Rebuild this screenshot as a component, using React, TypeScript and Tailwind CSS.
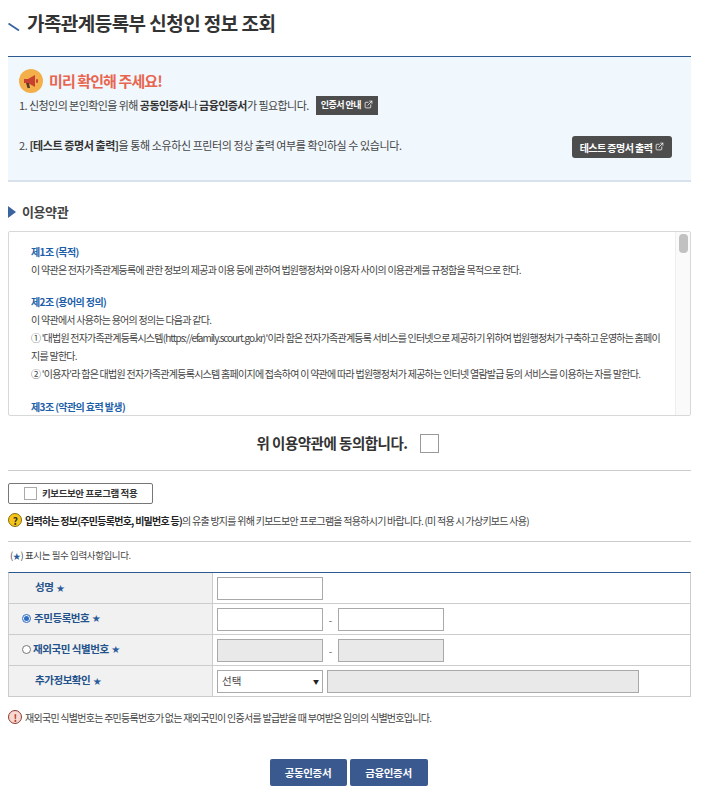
import { ExternalLink } from "lucide-react";

const font = "font-['Noto_Sans_CJK_KR','Noto_Sans',sans-serif]";

function Star() {
  return <span className="text-[#2b5a9b] text-[8px] ml-[3px]">★</span>;
}

function Megaphone() {
  return (
    <svg width="24" height="24" viewBox="0 0 24 24" className="shrink-0">
      <circle cx="12" cy="12" r="12" fill="#f3b04a" />
      <path d="M5 10h4l7-4v12l-7-4H5z" fill="#c8402f" />
      <path d="M7 14h3l1 5H8.500z" fill="#5a3a2a" />
      <rect x="17" y="10" width="2" height="4" rx="1" fill="#c8402f" />
    </svg>
  );
}

function InfoBox() {
  return (
    <div className="h-[126px] border-t border-t-[#2c5a8e] border-b-2 border-b-[#d9e2ec] bg-[#f0f7fd] pl-[11px] pr-[19px] pt-3">
      <div className="flex items-center gap-[6px] h-6">
        <Megaphone />
        <span className="text-[15px] font-bold tracking-[-0.9px] text-[#e8654f]">미리 확인해 주세요!</span>
      </div>
      <div className="flex items-center h-[20px] mt-[2px] text-[11px] tracking-[-0.56px] text-[#444]">
        <span>
          1. 신청인의 본인확인을 위해 <b className="font-bold text-[#333]">공동인증서</b>나 <b className="font-bold text-[#333]">금융인증서</b>가 필요합니다.
        </span>
        <span className="ml-[7px] flex items-center gap-[3px] h-[19px] px-[5px] bg-[#4d4d4d] text-white text-[9px] font-bold tracking-[-0.5px]">
          인증서 안내
          <ExternalLink size={9} strokeWidth={2} className="mb-[2px]" />
        </span>
      </div>
      <div className="flex items-center justify-between h-[22px] mt-[19px] text-[11px] tracking-[-0.42px] text-[#444]">
        <span>
          2. <b className="font-bold text-[#333]">[테스트 증명서 출력]</b>을 통해 소유하신 프린터의 정상 출력 여부를 확인하실 수 있습니다.
        </span>
        <span className="flex items-center justify-center gap-[3px] w-[100px] h-[22px] mt-[4px] rounded-[3px] bg-[#4d4d4d] text-white text-[10px] font-bold tracking-[-0.55px]">
          테스트 증명서 출력
          <ExternalLink size={9} strokeWidth={2} className="mb-[2px]" />
        </span>
      </div>
    </div>
  );
}

function Terms() {
  const title = "text-[#1d5fa8] font-bold h-[18px] tracking-[-0.6px]";
  const line = "h-[18px] whitespace-nowrap";
  return (
    <div className="relative h-[185px] mt-[9px] rounded-[2px] border border-[#d8d8d8] overflow-hidden">
      <div className="pl-[22px] pt-[11px] text-[10px] leading-[18px] tracking-[-0.74px] text-[#444]">
        <p className={title}>제1조 (목적)</p>
        <p className={line}>이 약관은 전자가족관계등록에 관한 정보의 제공과 이용 등에 관하여 법원행정처와 이용자 사이의 이용관계를 규정함을 목적으로 한다.</p>
        <p className={`${title} mt-[14px]`}>제2조 (용어의 정의)</p>
        <p className={line}>이 약관에서 사용하는 용어의 정의는 다음과 같다.</p>
        <p className={`${line} tracking-[-0.8px]`}>
          ① '대법원 전자가족관계등록시스템(<span className="tracking-[-1.05px]">https://efamily.scourt.go.kr</span>)'이라 함은 전자가족관계등록 서비스를 인터넷으로 제공하기 위하여 법원행정처가 구축하고 운영하는 홈페이
        </p>
        <p className={line}>지를 말한다.</p>
        <p className={line}>② '이용자'라 함은 대법원 전자가족관계등록시스템 홈페이지에 접속하여 이 약관에 따라 법원행정처가 제공하는 인터넷 열람발급 등의 서비스를 이용하는 자를 말한다.</p>
        <p className={`${title} mt-[15px]`}>제3조 (약관의 효력 발생)</p>
      </div>
      <div className="absolute right-0 top-0 bottom-0 w-[15px] border-l border-[#eee] bg-[#fafafa]">
        <div className="mx-auto mt-[2px] w-[9px] h-[19px] rounded-[4px] bg-[#c1c1c1]" />
      </div>
    </div>
  );
}

function Field({ gray, className = "w-[106px]" }: { gray?: boolean; className?: string }) {
  return (
    <div
      className={`h-[23px] border border-[#a9a9a9] ${gray ? "bg-[#e9e9e9]" : "bg-white"} ${className}`}
    />
  );
}

function Row({ label, children, last }: { label: React.ReactNode; children: React.ReactNode; last?: boolean }) {
  return (
    <div className={`flex ${last ? "h-[30px]" : "h-[31px] border-b border-[#ccc]"}`}>
      <div className="w-[204px] shrink-0 flex items-center pb-[2px] bg-[#f1f1f1] border-r border-[#ccc] text-[10.500px] font-bold tracking-[-0.45px] text-[#24528a]">
        {label}
      </div>
      <div className="flex-1 flex items-center pl-1 gap-1">{children}</div>
    </div>
  );
}

function Dash() {
  return <span className="w-[7px] text-center text-[10px] text-[#666]">-</span>;
}

export default function App() {
  return (
    <div className={`w-[724px] h-[809px] bg-white pl-2 pr-[33px] overflow-hidden text-[#333] ${font}`}>
      <div className="flex items-center h-[56px] pb-[9px]">
        <svg width="12" height="8" viewBox="0 0 12 8" className="mr-[7px] mt-[6px] shrink-0">
          <path d="M0.500 0.500 L11 7.500" stroke="#3a64a0" strokeWidth="1.800" />
        </svg>
        <h1 className="text-[19px] font-bold tracking-[-0.55px] text-[#333]">가족관계등록부 신청인 정보 조회</h1>
      </div>

      <InfoBox />

      <div className="flex items-center h-[20px] mt-[20px]">
        <span className="w-0 h-0 border-y-[6px] border-y-transparent border-l-[8px] border-l-[#3a64a0] mr-[6px]" />
        <h2 className="text-[13px] font-bold tracking-[-0.4px] text-[#444]">이용약관</h2>
      </div>

      <Terms />

      <div className="flex items-center justify-center gap-3 h-[20px] mt-[17px] pr-[4px]">
        <span className="text-[14.500px] font-bold tracking-[-0.5px] text-[#333]">위 이용약관에 동의합니다.</span>
        <span className="w-[19px] h-[19px] border border-[#999] bg-white" />
      </div>

      <div className="border-t border-[#ccc] mt-[17px]" />

      <div className="flex items-center w-[145px] h-[21px] mt-[12px] pl-[15px] rounded-[2px] border border-[#777]">
        <span className="w-[13px] h-[13px] border border-[#aaa]" />
        <span className="ml-[5px] text-[9.500px] font-bold tracking-[-0.4px] text-[#333]">키보드보안 프로그램 적용</span>
      </div>

      <div className="flex items-center h-[16px] mt-[8px] text-[10px] tracking-[-0.74px] text-[#444]">
        <span className="flex items-center justify-center w-[14px] h-[14px] mr-[3px] rounded-full bg-[#f5c518] border border-[#8a6d10] text-[10px] font-bold text-[#333]">?</span>
        <span>
          <b className="font-bold text-[#222]">입력하는 정보(주민등록번호, 비밀번호 등)</b>의 유출 방지를 위해 키보드보안 프로그램을 적용하시기 바랍니다. (미 적용 시 가상키보드 사용)
        </span>
      </div>

      <div className="border-t border-[#ccc] mt-[13px]" />

      <p className="h-[16px] mt-[5px] pl-[2px] text-[9.500px] leading-[16px] tracking-[-0.4px] text-[#444]">
        (<span className="text-[#2b5a9b] text-[8px]">★</span>) 표시는 필수 입력사항입니다.
      </p>

      <div className="mt-[9px] border-t border-t-[#2c5a8e] border-x border-b border-x-[#ccc] border-b-[#ccc]">
        <Row label={<span className="pl-[26px]">성명<Star /></span>}>
          <Field />
        </Row>
        <Row
          label={
            <span className="flex items-center pl-[13px]">
              <span className="flex items-center justify-center w-[9px] h-[9px] mr-[3px] rounded-full border border-[#2b6cc4]">
                <span className="w-[5px] h-[5px] rounded-full bg-[#2b6cc4]" />
              </span>
              주민등록번호<Star />
            </span>
          }
        >
          <Field />
          <Dash />
          <Field />
        </Row>
        <Row
          label={
            <span className="flex items-center pl-[13px]">
              <span className="w-[9px] h-[9px] mr-[2px] rounded-full border border-[#777] bg-white" />
              재외국민 식별번호<Star />
            </span>
          }
        >
          <Field gray />
          <Dash />
          <Field gray />
        </Row>
        <Row last label={<span className="pl-[26px]">추가정보확인<Star /></span>}>
          <div className="flex items-center justify-between w-[106px] h-[23px] pl-[4px] pr-[3px] border border-[#a9a9a9] text-[10.500px] text-[#444]">
            선택
            <span className="text-[6px] text-[#222]">▼</span>
          </div>
          <Field gray className="w-[312px]" />
        </Row>
      </div>

      <div className="flex items-center h-[16px] mt-[12px] text-[10px] tracking-[-0.74px] text-[#444]">
        <span className="flex items-center justify-center w-[14px] h-[14px] mr-[3px] rounded-full bg-[#f7d9d2] border border-[#8a3a30] text-[10px] font-bold text-[#b03a2e]">!</span>
        재외국민 식별번호는 주민등록번호가 없는 재외국민이 인증서를 발급받을 때 부여받은 임의의 식별번호입니다.
      </div>

      <div className="flex justify-center gap-[3px] mt-[34px] pr-[2px]">
        <button className="w-[77px] h-[27px] rounded-[2px] bg-[#3a5a8f] text-white text-[10.500px] font-bold tracking-[-0.4px]">공동인증서</button>
        <button className="w-[78px] h-[27px] rounded-[2px] bg-[#3a5a8f] text-white text-[10.500px] font-bold tracking-[-0.4px]">금융인증서</button>
      </div>
    </div>
  );
}
